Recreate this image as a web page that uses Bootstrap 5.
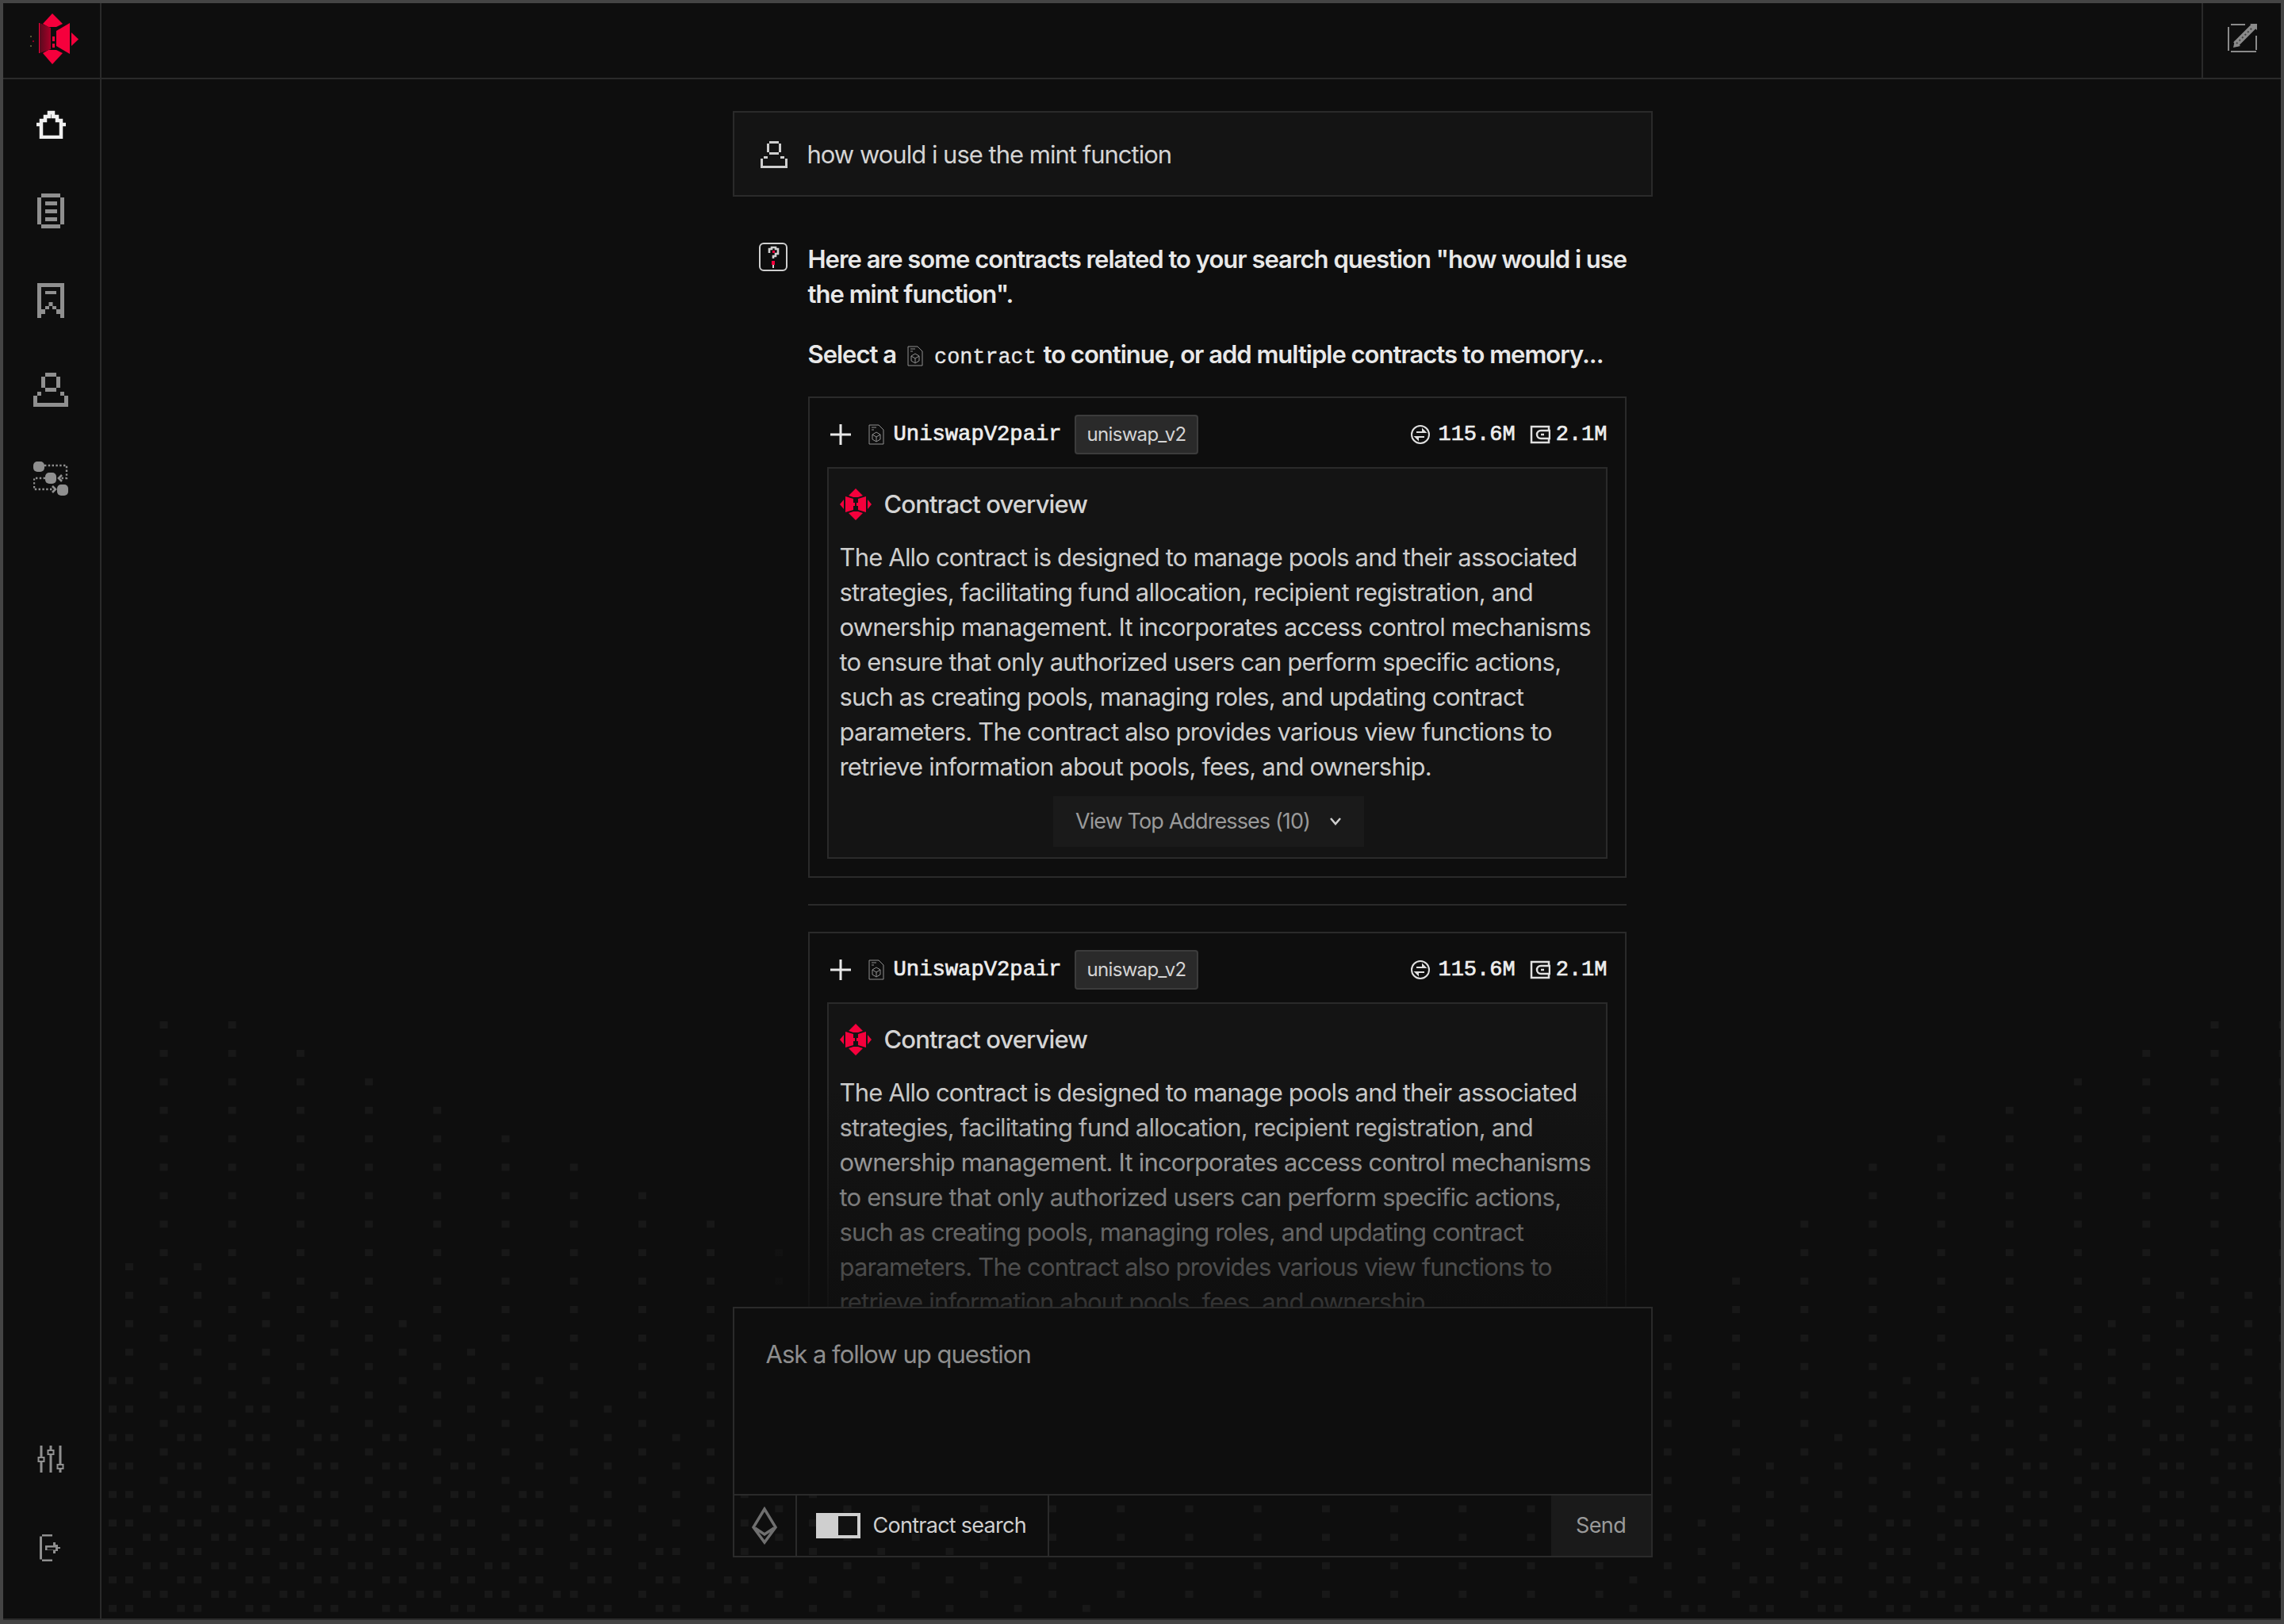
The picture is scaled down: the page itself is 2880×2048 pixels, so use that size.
<!DOCTYPE html>
<html lang="en"><head><meta charset="utf-8">
<link href="https://cdn.jsdelivr.net/npm/bootstrap@5.3.0/dist/css/bootstrap.min.css" rel="stylesheet">
<style>
html,body{height:100%;background:#0e0e0e}
body{font-family:Inter,"Liberation Sans",sans-serif;color:#d4d4d4;overflow:hidden;font-size:31px}
.shell{width:2880px;height:2048px;border:solid #444;border-width:4px 4px 5px 4px;display:flex;flex-direction:column;position:relative;background:#0e0e0e}
.topbar{height:96px;flex:none;border-bottom:2px solid #2a2a2a;display:flex;justify-content:space-between}
.brandcell{width:124px;border-right:2px solid #2a2a2a;display:flex;align-items:center;justify-content:center;padding:0 0 4px 6px}
.editcell{width:100px;border-left:2px solid #2a2a2a;display:flex;align-items:center;justify-content:center;padding:0 0 7px 2px}
.bodyrow{flex:1;display:flex;min-height:0;border-bottom:2px solid #2a2a2a}
.rail{width:124px;flex:none;border-right:2px solid #2a2a2a;display:flex;flex-direction:column;align-items:center;justify-content:space-between;padding:37px 2px 72px 0}
.railset{display:flex;flex-direction:column;align-items:center;gap:69px}
.railset-low{gap:78px}
.stage{flex:1;position:relative;display:flex;justify-content:center;min-width:0}
.dots{position:absolute;left:0;top:0}
.column{width:1160px;margin-left:3px;position:relative;display:flex;flex-direction:column;padding:40px 0 77px;height:100%}
.query{height:108px;background:#141414;border:2px solid #2a2a2a;display:flex;align-items:center;padding:2px 0 0 33px;gap:25px;font-size:31px;letter-spacing:-1px;color:#d4d4d4;flex:none}
.answer{display:flex;margin-top:57px;padding-left:33px;gap:26px}
.qicon{flex:none;margin-top:1px}
.answertext{width:1032px;flex:none}
.lede{font-weight:600;font-size:31px;line-height:44px;letter-spacing:-1px;color:#e8e8e8;margin:0 -30px 32px 0}
.lede-last{margin-bottom:27px}
.mono{font-family:"Liberation Mono",monospace}
.lede .mono{font-weight:400;font-size:26.8px;letter-spacing:0;margin:0 2px 0 14px;-webkit-text-stroke:.3px #e8e8e8}
.ledeicon{vertical-align:-4px;margin-left:14px}
.contract{border:2px solid #2a2a2a;padding:21px 22px 22px;background:#0e0e0e}
.chead{height:50px;display:flex;align-items:center;padding-left:3px}
.fileicon{margin-left:21px}
.cname{font-size:27.2px;color:#ededed;margin-left:12px;-webkit-text-stroke:.7px #ededed}
.tag{height:50px;display:flex;align-items:center;padding:0 14px;background:#2a2a2a;border:2px solid #3c3c3c;border-radius:4px;font-size:24px;letter-spacing:-.7px;color:#d4d4d4;margin-left:16px}
.stat{font-size:27px;color:#ededed;display:flex;align-items:center;gap:10px;-webkit-text-stroke:.7px #ededed}
.stat-next{margin-left:18px;gap:7px}
.overview{margin-top:16px;background:#141414;border:2px solid #2a2a2a;padding:20px 14px 13px}
.ovhead{display:flex;align-items:center;gap:16px;height:50px;font-weight:500;font-size:31px;letter-spacing:-.9px;color:#d4d4d4}
.ovbody{font-size:31px;line-height:44px;letter-spacing:-.82px;color:#cecece;margin:20px -7px 0 0}
.moretop{display:flex;justify-content:center;margin-top:15px;padding-right:21px}
.morebtn{width:392px;height:64px;background:#1a1a1a;color:#9a9a9a;font-size:27px;letter-spacing:-.9px;border:0;border-radius:0;display:flex;align-items:center;justify-content:center;gap:24px;padding:0}
.splitline{height:2px;background:#2a2a2a;margin:33px 0}
.clipbox{flex:1;min-height:0;overflow:hidden;position:relative}
.scrollfade{position:absolute;left:0;right:0;bottom:0;height:280px;background:linear-gradient(rgba(14,14,14,0),rgba(14,14,14,.82));pointer-events:none}
.composer{height:316px;flex:none;border:2px solid #2a2a2a;display:flex;flex-direction:column}
.askbox{flex:1;padding:36px 40px 0;font-size:31px;letter-spacing:-1px;color:#8e8e8e;line-height:44px;background:#0e0e0e}
.askbar{height:78px;flex:none;border-top:2px solid #2a2a2a;display:flex}
.ethcell{width:79px;border-right:2px solid #2a2a2a;display:flex;align-items:center;justify-content:center}
.togglecell{width:318px;border-right:2px solid #2a2a2a;display:flex;align-items:center;padding-left:24px;gap:16px;font-size:27px;letter-spacing:-.73px;color:#d0d0d0}
.swatch{width:56px;height:32px;background:#cfcfcf;position:relative;display:block}
.swatch::after{content:"";position:absolute;right:4px;top:4px;width:24px;height:24px;background:#111}
.sendcell{margin-left:auto;width:126px;background:#1a1a1a;border:0;border-radius:0;color:#9a9a9a;font-size:27px;letter-spacing:-.6px;padding:0}
</style></head><body>
<div class="shell">
 <div class="topbar">
  <div class="brandcell"><svg width="61" height="64" viewBox="-11 0 61 64" role="img" aria-label="logo">
   <defs><linearGradient id="lp" x1="0" x2="1" y1="0" y2="0"><stop offset="0" stop-color="#5a0a1e"/><stop offset="1" stop-color="#a80028"/></linearGradient></defs>
   <g fill="#f5003c"><path d="M17 0L30 13L22 17H12L5 13Z"/><path d="M17 64L30 50L22 46H12L5 50Z"/><path d="M22 22L39 12V51L22 41Z"/><path d="M41 24L50 32.5L41 41Z"/><path d="M17 29h3v6h-3zM17 38h3v5h-3z"/><path d="M0 12h1v38H0z"/></g>
   <path d="M1 12L15 18V45L1 50Z" fill="url(#lp)"/>
   <g fill="#553"><rect x="-11" y="28" width="2" height="2"/><rect x="-8" y="34" width="2" height="2" fill="#802"/><rect x="-11" y="40" width="2" height="2"/></g></svg></div>
  <div class="editcell"><svg width="38" height="37" viewBox="0 0 38 37" fill="none" stroke="#8a8a8a" stroke-width="2"><path d="M4 2h18M1 5v30M4 36h32M36 16v18"/><path d="M10 27L33 4" stroke-width="8"/><path d="M28 1h9v8zM7 31l2-9 7 7z" fill="#8a8a8a" stroke="none"/><path d="M11 26L32 5" stroke="#444" stroke-width="2" stroke-dasharray="2 3"/></svg></div>
 </div>
 <div class="bodyrow">
  <nav class="rail">
   <div class="railset">
    <svg width="39" height="38" viewBox="0 0 39 38" fill="none" stroke="#f0f0f0" stroke-width="4.500"><path d="M7 20v16h25V20M1 20h6v-5h5v-5h5V5h5v5h5v5h5v5h6"/></svg>
    <svg width="34" height="44" viewBox="0 0 34 44" fill="#8f8f8f"><path d="M5 0h24v5H5zM0 5h5v34H0zM29 5h5v34h-5zM5 39h24v5H5zM10 10h15v5H10zM10 20h15v5H10zM10 30h15v5H10z"/></svg>
    <svg width="34" height="44" viewBox="0 0 34 44" fill="#8f8f8f"><path d="M0 0h34v44h-5V5H5v39H0zM10 10h14v4H10zM14.5 24h5v5h-5zM10 29h5v4h-5zM19 29h5v4h-5zM5 33h5v6H5zM24 33h5v6h-5z"/></svg>
    <svg width="44" height="43" viewBox="0 0 44 43" fill="#8f8f8f"><path d="M15 0h14v5H15zM10 5h5v14h-5zM29 5h5v14h-5zM15 19h14v5H15zM5 24h5v5H5zM34 24h5v5h-5zM0 29h5v9h34v-9h5v14H0z"/></svg>
    <svg width="44" height="43" viewBox="0 0 44 43"><g fill="#8f8f8f"><rect x="0" y="0" width="14" height="13" rx="5"/><rect x="15" y="14" width="14" height="14" rx="5"/><rect x="30" y="29" width="14" height="14" rx="5"/></g><g fill="none" stroke="#8f8f8f" stroke-width="2.4" stroke-dasharray="2.4 2.4"><path d="M14 5h28v16H34M15 21H1v14h24"/></g><path d="M36 17l-4 4 4 4M24 31l4 4-4 4" fill="none" stroke="#8f8f8f" stroke-width="2.6"/></svg>
   </div>
   <div class="railset railset-low">
    <svg width="34" height="34" viewBox="0 0 34 34" fill="none" stroke="#8f8f8f" stroke-width="3"><path d="M5 0v34M17 0v34M29 0v34"/><g fill="#0e0e0e" stroke-width="2"><rect x="1.5" y="15" width="7" height="5"/><rect x="13.5" y="6" width="7" height="5"/><rect x="25.5" y="24" width="7" height="5"/></g></svg>
    <svg width="28" height="34" viewBox="0 0 28 34" fill="#8f8f8f"><path d="M3 0h13v2.5H3zM0 2.500h3v29H0zM3 31.500h13V34H3z"/><path d="M7 14h10v-4h3v3h3v3h3v2h-3v3h-3v3h-3v-4H7zM9.500 16.500v3H20v-3z" fill-rule="evenodd"/></svg>
   </div>
  </nav>
  <main class="stage">
   <svg class="dots" id="dotfield" width="2748" height="1941" viewBox="128 100 2748 1941" aria-hidden="true"></svg>
   <div class="column">
    <div class="query"><svg width="34" height="34" viewBox="0 0 34 34" fill="#cfcfcf"><path d="M11 0h12v3H11zM8 3h3v11H8zM23 3h3v11h-3zM11 14h12v3H11zM4 19h5v3H3v9h28v-9h-6v-3h5v3h4v12H0V22h4z"/></svg><span>how would i use the mint function</span></div>
    <div class="clipbox">
    <div class="answer">
     <svg class="qicon" width="36" height="36" viewBox="0 0 36 36" fill="none"><rect x="1" y="1" width="34" height="34" rx="5" stroke="#cfcfcf" stroke-width="2"/><path d="M13 13V8h3V6h5v2h3v6h-3v3h-3v3" stroke="#cfcfcf" stroke-width="2.6"/><rect x="17" y="10" width="3" height="3" fill="#f5003c"/><rect x="16" y="23" width="4" height="5" fill="#f5003c"/><path d="M18 28v4" stroke="#cfcfcf" stroke-width="2"/></svg>
     <div class="answertext">
      <p class="lede">Here are some contracts related to your search question "how would i use the mint function".</p>
      <p class="lede lede-last">Select a<svg class="ledeicon" width="20" height="26" viewBox="0 0 20 26" fill="none" stroke="#8f8f8f"><path d="M1 1h12l6 6v18H1z"/><path d="M4 4h6M4 7h3"/><path d="M10 10l5 3v6l-5 3-5-3v-6zM5 13l5 3 5-3M10 16v6"/></svg><span class="mono">contract</span> to continue, or add multiple contracts to memory...</p>

      <section class="contract">
       <div class="chead"><svg width="28" height="28" viewBox="0 0 28 28" stroke="#e8e8e8" stroke-width="3"><path d="M14 1v26M1 14h26"/></svg><svg class="fileicon" width="20" height="26" viewBox="0 0 20 26" fill="none" stroke="#8f8f8f"><path d="M1 1h12l6 6v18H1z"/><path d="M4 4h6M4 7h3"/><path d="M10 10l5 3v6l-5 3-5-3v-6zM5 13l5 3 5-3M10 16v6"/></svg><span class="mono cname">UniswapV2pair</span><span class="tag">uniswap_v2</span>
        <span class="mono stat ms-auto"><svg width="24" height="26" viewBox="0 0 24 26" fill="none" stroke="#e0e0e0" stroke-width="2"><circle cx="12" cy="13" r="11"/><path d="M7 10h10M7 16h10"/><path d="M15 7l3 3h-3zM9 19l-3-3h3z" fill="#e0e0e0"/></svg>115.6M</span>
        <span class="mono stat stat-next"><svg width="26" height="24" viewBox="0 0 26 24" fill="none" stroke="#e0e0e0" stroke-width="2.500"><path d="M24 6V2H2v20h22v-4"/><path d="M25 7H14a5 5 0 0 0 0 10h11z"/><path d="M14 12h4"/></svg>2.1M</span></div>
       <div class="overview">
        <div class="ovhead"><svg width="40" height="40" viewBox="0 0 40 40" fill="#f5003c"><path d="M20 0l9 9-6 2h-6l-6-2zM7 10l10 3v5h2v4h-2v5L7 30zM33 10l-10 3v5h-2v4h2v5l10 3zM20 40l-9-9 6-2h6l6 2zM5 14v12l-5-6zM35 14v12l5-6z"/></svg>Contract overview</div>
        <p class="ovbody">The Allo contract is designed to manage pools and their associated strategies, facilitating fund allocation, recipient registration, and ownership management. It incorporates access control mechanisms to ensure that only authorized users can perform specific actions, such as creating pools, managing roles, and updating contract parameters. The contract also provides various view functions to retrieve information about pools, fees, and ownership.</p>
        <div class="moretop"><button class="btn morebtn" type="button">View Top Addresses (10)<svg width="16" height="10" viewBox="0 0 16 10" fill="none" stroke="#cfcfcf" stroke-width="2.500"><path d="M2 1l6 7 6-7"/></svg></button></div>
       </div>
      </section>
      <div class="splitline"></div>
      <section class="contract">
       <div class="chead"><svg width="28" height="28" viewBox="0 0 28 28" stroke="#e8e8e8" stroke-width="3"><path d="M14 1v26M1 14h26"/></svg><svg class="fileicon" width="20" height="26" viewBox="0 0 20 26" fill="none" stroke="#8f8f8f"><path d="M1 1h12l6 6v18H1z"/><path d="M4 4h6M4 7h3"/><path d="M10 10l5 3v6l-5 3-5-3v-6zM5 13l5 3 5-3M10 16v6"/></svg><span class="mono cname">UniswapV2pair</span><span class="tag">uniswap_v2</span>
        <span class="mono stat ms-auto"><svg width="24" height="26" viewBox="0 0 24 26" fill="none" stroke="#e0e0e0" stroke-width="2"><circle cx="12" cy="13" r="11"/><path d="M7 10h10M7 16h10"/><path d="M15 7l3 3h-3zM9 19l-3-3h3z" fill="#e0e0e0"/></svg>115.6M</span>
        <span class="mono stat stat-next"><svg width="26" height="24" viewBox="0 0 26 24" fill="none" stroke="#e0e0e0" stroke-width="2.500"><path d="M24 6V2H2v20h22v-4"/><path d="M25 7H14a5 5 0 0 0 0 10h11z"/><path d="M14 12h4"/></svg>2.1M</span></div>
       <div class="overview">
        <div class="ovhead"><svg width="40" height="40" viewBox="0 0 40 40" fill="#f5003c"><path d="M20 0l9 9-6 2h-6l-6-2zM7 10l10 3v5h2v4h-2v5L7 30zM33 10l-10 3v5h-2v4h2v5l10 3zM20 40l-9-9 6-2h6l6 2zM5 14v12l-5-6zM35 14v12l5-6z"/></svg>Contract overview</div>
        <p class="ovbody">The Allo contract is designed to manage pools and their associated strategies, facilitating fund allocation, recipient registration, and ownership management. It incorporates access control mechanisms to ensure that only authorized users can perform specific actions, such as creating pools, managing roles, and updating contract parameters. The contract also provides various view functions to retrieve information about pools, fees, and ownership.</p>
       </div>
      </section>
     </div>
    </div>
    <div class="scrollfade"></div>
    </div>
    <div class="composer">
     <div class="askbox">Ask a follow up question</div>
     <div class="askbar">
      <div class="ethcell"><svg width="32" height="48" viewBox="0 0 32 48" fill="none" stroke="#6f6f6f" stroke-width="3.500"><path d="M16 3L2 26l14 19 14-19zM4 27l12 8 12-8"/></svg></div>
      <div class="togglecell"><span class="swatch"></span>Contract search</div>
      <button class="btn sendcell" type="button">Send</button>
     </div>
    </div>
   </div>
  </main>
 </div>
</div>
<script>
(function(){
 var S=86.2,R=35.9,out=[];
 function put(x0,y0,k,start){
  for(var r=start;;r++){var y=y0+r*R;if(y>2040)break;
   out.push('<rect x="'+(x0+k*S-5).toFixed(1)+'" y="'+(y-4).toFixed(1)+'" width="10" height="9"/>');}
 }
 var bR=[1,1,2,3,4,4,6,7,9],cL=[4,5,5,6,6,7,8,9,10,11],cR=[5,6,7,7,8,9,10,11,12],dL=[17,17,17,18,18,19,20],dR=[17,18,18,19,20,20];
 for(var k=0;k<=31;k++){
  var a1=k<=1?0:k-1,ra=30-k,a2=ra<=5?Math.max(ra,0):5+2*(ra-5);put(206.5,1292,k,Math.min(a1,a2));
  var b1=k<2?0:k<4?1:k-2,rb=31-k,b2=rb<bR.length?bR[rb]:9+2*(rb-8);put(163,1597,k,Math.min(b1,b2));
  var c1=k<cL.length?cL[k]:99,rc=31-k,c2=rc<cR.length?cR[rc]:99;put(142,1597,k,Math.min(c1,c2));
  var d1=k<dL.length?dL[k]:21,rd=31-k,d2=rd<dR.length?dR[rd]:21;put(185,1292,k,Math.min(d1,d2));
 }
 var s=document.getElementById('dotfield');s.setAttribute('fill','#181818');s.innerHTML=out.join('');
})();
</script>
<script src="https://cdn.jsdelivr.net/npm/bootstrap@5.3.0/dist/js/bootstrap.bundle.min.js"></script>
</body></html>
